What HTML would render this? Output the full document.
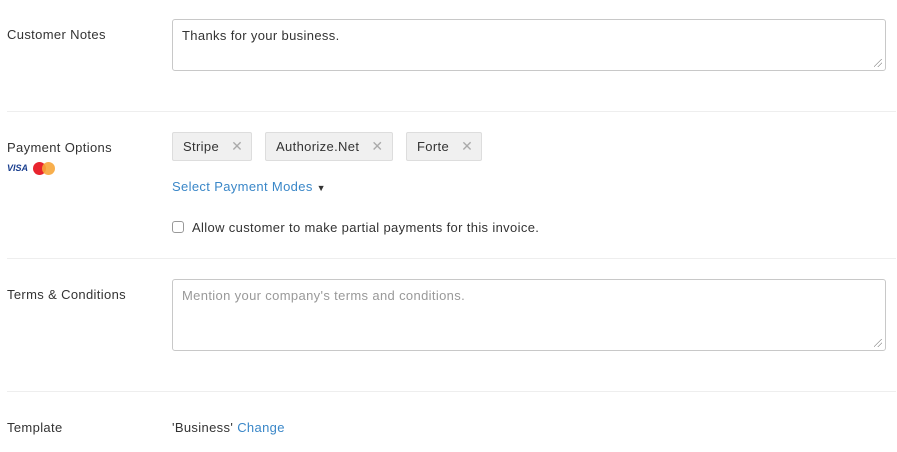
<!DOCTYPE html>
<html><head><style>
body{margin:0;width:897px;height:452px;background:#fff;font-family:"Liberation Sans",sans-serif;font-size:13px;letter-spacing:0.35px;color:#333;position:relative;overflow:hidden}
.a{position:absolute}
.lbl{left:7px}
.ta{left:172px;width:714px;border:1px solid #c8c8c8;border-radius:3px;box-sizing:border-box;padding:8px 9px;font-size:13px}
.hr{left:7px;width:889px;height:1px;background:#eee}
.tag{top:132px;height:29px;background:#f0f0f0;border:1px solid #ddd;box-sizing:border-box;border-radius:2px;line-height:27px;padding-left:10px;font-size:13px;color:#333}
.tag span{color:#aaa;margin-left:12px;font-size:14px}
.blue{color:#3a87c8}
.grip{right:3px;bottom:3px;width:8px;height:8px;background:linear-gradient(135deg,transparent 45%,#999 45%,#999 52%,transparent 52%,transparent 70%,#999 70%,#999 77%,transparent 77%)}
</style></head><body>
<div class="a lbl" style="top:27px">Customer Notes</div>
<div class="a ta" style="top:19px;height:52px">Thanks for your business.<div class="a grip"></div></div>
<div class="a hr" style="top:111px"></div>

<div class="a lbl" style="top:140px">Payment Options</div>
<div class="a" style="left:7px;top:163px;font-size:9px;font-weight:bold;font-style:italic;color:#1a3f8f;letter-spacing:0">VISA</div>
<div class="a" style="left:33px;top:162px;width:13px;height:13px;border-radius:50%;background:#e8242e"></div>
<div class="a" style="left:42px;top:162px;width:13px;height:13px;border-radius:50%;background:#f7a63a;opacity:.9"></div>
<div class="a tag" style="left:172px;width:80px">Stripe<span>✕</span></div>
<div class="a tag" style="left:265px;width:128px">Authorize.Net<span>✕</span></div>
<div class="a tag" style="left:406px;width:76px">Forte<span>✕</span></div>
<div class="a blue" style="left:172px;top:179px">Select Payment Modes <span style="color:#333;font-size:9px">▼</span></div>
<div class="a" style="left:172px;top:221px;width:12px;height:12px;border:1px solid #999;border-radius:3px;box-sizing:border-box"></div>
<div class="a" style="left:192px;top:220px">Allow customer to make partial payments for this invoice.</div>
<div class="a hr" style="top:258px"></div>

<div class="a lbl" style="top:287px">Terms &amp; Conditions</div>
<div class="a ta" style="top:279px;height:72px;color:#999">Mention your company's terms and conditions.<div class="a grip"></div></div>
<div class="a hr" style="top:391px"></div>

<div class="a lbl" style="top:420px">Template</div>
<div class="a" style="left:172px;top:420px">'Business' <span class="blue">Change</span></div>
</body></html>
